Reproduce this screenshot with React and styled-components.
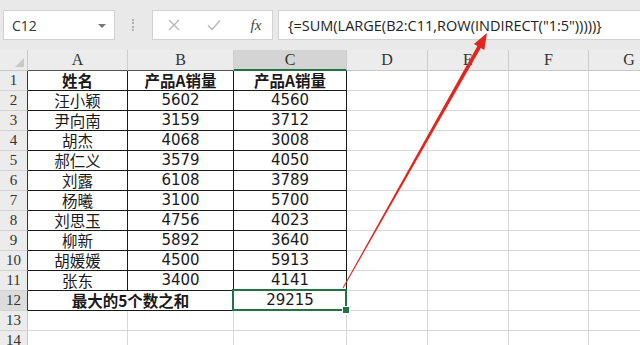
import React from "react"
import styled, { createGlobalStyle } from "styled-components"

const GlobalStyle = createGlobalStyle`
  html, body {
    margin: 0;
    padding: 0;
    background: #ffffff;
    overflow: hidden;
  }
`

const GREEN = "#217346"
const GRID = "#d8d8d8"
const INK = "#1a1a1a"

const COLS = ["A", "B", "C", "D", "E", "F", "G"]

const DATA = [
  ["汪小颖", "5602", "4560"],
  ["尹向南", "3159", "3712"],
  ["胡杰", "4068", "3008"],
  ["郝仁义", "3579", "4050"],
  ["刘露", "6108", "3789"],
  ["杨曦", "3100", "5700"],
  ["刘思玉", "4756", "4023"],
  ["柳新", "5892", "3640"],
  ["胡媛媛", "4500", "5913"],
  ["张东", "3400", "4141"],
]

//Styles
const Page = styled.div`
  position: relative;
  width: 640px;
  height: 345px;
  overflow: hidden;
  background: #ffffff;
  font-family: "Noto Sans CJK SC", "Liberation Sans", sans-serif;
`

const Toolbar = styled.div`
  display: flex;
  align-items: flex-start;
  height: 50px;
  box-sizing: border-box;
  padding: 10px 0 0 3px;
  background: #e9e9e9;
`

const NameBox = styled.div`
  position: relative;
  display: flex;
  align-items: center;
  width: 112px;
  height: 30px;
  box-sizing: border-box;
  padding-left: 8px;
  background: #fff;
  border: 1px solid #d2d2d2;
  font-family: "Open Sans", "Liberation Sans", sans-serif;
  font-size: 14px;
  color: #333;
`

const Caret = styled.span`
  position: absolute;
  right: 8px;
  top: 13px;
  width: 0;
  height: 0;
  border-left: 4px solid transparent;
  border-right: 4px solid transparent;
  border-top: 4px solid #777;
`

const Grip = styled.div`
  width: 2px;
  height: 12px;
  margin: 9px 16px 0 17px;
  border-left: 2px dotted #b0b0b0;
`

const FxBox = styled.div`
  display: flex;
  align-items: center;
  width: 121px;
  height: 30px;
  box-sizing: border-box;
  background: #fff;
  border: 1px solid #d2d2d2;
  padding-left: 14px;
`

const FxIcon = styled.span`
  display: flex;
  align-items: center;
  justify-content: center;
  width: ${(p) => p.$w}px;
  color: ${(p) => p.$color || "#b5b5b5"};
  font-family: "Liberation Serif", serif;
  font-style: italic;
  font-size: 15px;
`

const Formula = styled.div`
  flex: 1;
  display: flex;
  align-items: center;
  height: 30px;
  box-sizing: border-box;
  margin-left: 5px;
  padding-left: 9px;
  background: #fff;
  border: 1px solid #d2d2d2;
  border-right: none;
  font-family: "Open Sans", "Liberation Sans", sans-serif;
  font-size: 14.5px;
  color: #222;
  white-space: nowrap;
`

const Sheet = styled.div`
  display: grid;
  grid-template-columns: 28px 100px 106px 113px 81px 81px 80px 81px;
  grid-template-rows: 21px;
  grid-auto-rows: 20px;
`

const Corner = styled.div`
  position: relative;
  background: #ececec;
  border-right: 1px solid #c8c8c8;
  border-bottom: 1px solid #c8c8c8;
  box-sizing: border-box;

  &::after {
    content: "";
    position: absolute;
    right: 3px;
    bottom: 3px;
    border-left: 9px solid transparent;
    border-bottom: 9px solid #c9c9c9;
  }
`

const ColHead = styled.div`
  display: flex;
  align-items: center;
  justify-content: center;
  box-sizing: border-box;
  background: ${(p) => (p.$active ? "#d4d4d4" : "#ececec")};
  border-right: 1px solid #cdcdcd;
  border-bottom: ${(p) => (p.$active ? `2px solid ${GREEN}` : `1px solid ${p.$under || "#c8c8c8"}`)};
  font-family: "Liberation Serif", serif;
  font-size: 16px;
  color: #333;
`

const RowHead = styled.div`
  display: flex;
  align-items: center;
  justify-content: center;
  box-sizing: border-box;
  background: ${(p) => (p.$active ? "#dcdcdc" : "#ececec")};
  border-right: 1px solid ${(p) => (p.$edge ? "#333" : "#c8c8c8")};
  border-bottom: 1px solid #d2d2d2;
  font-family: "Liberation Serif", serif;
  font-size: 15px;
  color: #333;
`

const Cell = styled.div`
  position: relative;
  display: flex;
  align-items: center;
  justify-content: center;
  box-sizing: border-box;
  grid-column: span ${(p) => p.$span || 1};
  border-right: 1px solid ${(p) => p.$right || GRID};
  border-bottom: 1px solid ${(p) => p.$bottom || GRID};
  font-family: ${(p) =>
    p.$num ? `"DejaVu Sans", "Liberation Sans", sans-serif` : `"Noto Sans CJK SC", sans-serif`};
  font-size: ${(p) => (p.$num ? "15px" : "15.5px")};
  font-weight: ${(p) => (p.$bold ? 700 : 400)};
  color: ${INK};
  line-height: 1;
  white-space: nowrap;
`

const Selected = styled(Cell)`
  &::after {
    content: "";
    position: absolute;
    left: -2px;
    top: -2px;
    right: -1px;
    bottom: -1px;
    border: 2px solid ${GREEN};
  }
  &::before {
    content: "";
    position: absolute;
    right: -4px;
    bottom: -4px;
    width: 6px;
    height: 6px;
    background: ${GREEN};
    border: 1px solid #fff;
    z-index: 2;
  }
`

const Arrow = styled.svg`
  position: absolute;
  left: 0;
  top: 0;
  pointer-events: none;
`

const XIcon = () => (
  <svg width="14" height="14" viewBox="0 0 14 14">
    <path d="M2 2 L12 12 M12 2 L2 12" stroke="#b8b8b8" strokeWidth="1.4" fill="none" />
  </svg>
)

const CheckIcon = () => (
  <svg width="16" height="14" viewBox="0 0 16 14">
    <path d="M2 7.5 L6 11.5 L14 2.5" stroke="#b8b8b8" strokeWidth="1.4" fill="none" />
  </svg>
)

const App = () => {
  const border = (col, row) => {
    // table A1:C11 has black borders
    if (row <= 11 && col <= 2) return { $right: INK, $bottom: INK }
    return {}
  }

  const rows = []
  rows.push(
    <React.Fragment key="r1">
      <RowHead $edge>1</RowHead>
      <Cell {...border(0, 1)} $bold>姓名</Cell>
      <Cell {...border(1, 1)} $bold>产品A销量</Cell>
      <Cell {...border(2, 1)} $bold>产品A销量</Cell>
      {[3, 4, 5, 6].map((c) => (
        <Cell key={c} />
      ))}
    </React.Fragment>
  )

  DATA.forEach((d, i) => {
    const r = i + 2
    rows.push(
      <React.Fragment key={"r" + r}>
        <RowHead $edge>{r}</RowHead>
        <Cell {...border(0, r)}>{d[0]}</Cell>
        <Cell {...border(1, r)} $num>{d[1]}</Cell>
        <Cell {...border(2, r)} $num>{d[2]}</Cell>
        {[3, 4, 5, 6].map((c) => (
          <Cell key={c} />
        ))}
      </React.Fragment>
    )
  })

  rows.push(
    <React.Fragment key="r12">
      <RowHead $edge $active>12</RowHead>
      <Cell $span={2} $right={INK} $bottom={INK} $bold>
        最大的5个数之和
      </Cell>
      <Selected $num>29215</Selected>
      {[3, 4, 5, 6].map((c) => (
        <Cell key={c} />
      ))}
    </React.Fragment>
  )

  ;[13, 14].forEach((r) => {
    rows.push(
      <React.Fragment key={"r" + r}>
        <RowHead>{r}</RowHead>
        {[0, 1, 2, 3, 4, 5, 6].map((c) => (
          <Cell key={c} />
        ))}
      </React.Fragment>
    )
  })

  return (
    <>
      <GlobalStyle />
      <Page>
        <Toolbar>
          <NameBox>
            C12
            <Caret />
          </NameBox>
          <Grip />
          <FxBox>
            <FxIcon $w={14}>
              <XIcon />
            </FxIcon>
            <FxIcon $w={25} />
            <FxIcon $w={16}>
              <CheckIcon />
            </FxIcon>
            <FxIcon $w={26} />
            <FxIcon $w={16} $color="#444">
              fx
            </FxIcon>
          </FxBox>
          <Formula>{'{=SUM(LARGE(B2:C11,ROW(INDIRECT("1:5")))))}'}</Formula>
        </Toolbar>
        <Sheet>
          <Corner />
          {COLS.map((c, i) => (
            <ColHead key={c} $active={c === "C"} $under={i < 2 ? "#555" : undefined}>
              {c}
            </ColHead>
          ))}
          {rows}
        </Sheet>
        <Arrow width="640" height="345" viewBox="0 0 640 345">
          <polygon
            points="342.6,287.8 477.4,45.9 473.9,44.0 487,33 484.3,49.9 480.8,47.9 343.4,288.2"
            fill="#e3261d"
          />
        </Arrow>
      </Page>
    </>
  )
}

export default App
